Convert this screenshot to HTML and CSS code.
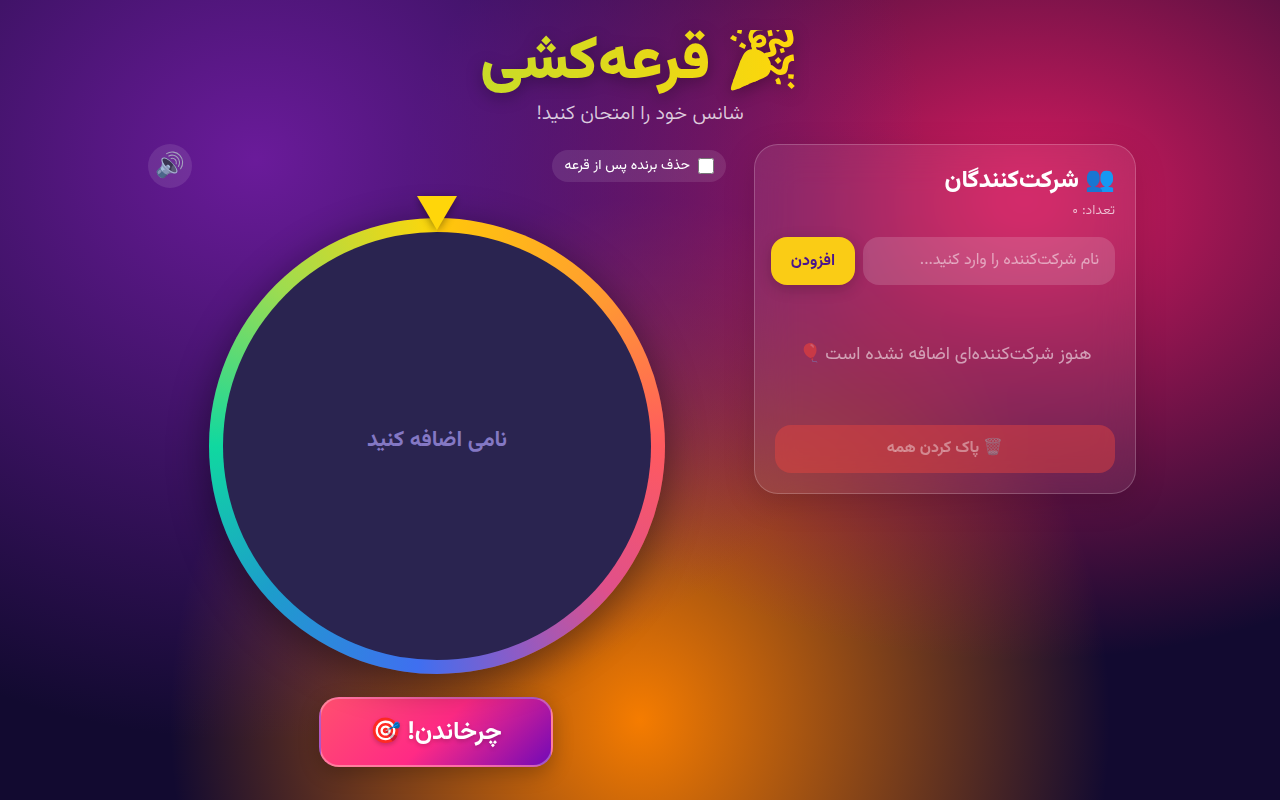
FILE: index.html
```html
<!DOCTYPE html>
<html lang="fa" dir="rtl">
<head>
<meta charset="utf-8">
<title>قرعه‌کشی</title>
<link rel="stylesheet" href="styles.css">
</head>
<body>
<div class="page">
  <header class="head">
    <h1 class="title">🎉 قرعه‌کشی</h1>
    <p class="subtitle">شانس خود را امتحان کنید!</p>
  </header>
  <main class="layout">
    <section class="panel">
      <h2 class="panel-title">👥 شرکت‌کنندگان</h2>
      <div class="count">تعداد: ۰</div>
      <div class="add-row">
        <input class="name-input" type="text" placeholder="نام شرکت‌کننده را وارد کنید...">
        <button class="add-btn">افزودن</button>
      </div>
      <div class="empty">هنوز شرکت‌کننده‌ای اضافه نشده است 🎈</div>
      <button class="clear-btn">🗑️ پاک کردن همه</button>
    </section>
    <section class="stage">
      <button class="sound">🔊</button>
      <label class="remove-toggle"><input class="check" type="checkbox"><span>حذف برنده پس از قرعه</span></label>
      <div class="wheel-wrap">
        <div class="pointer"></div>
        <div class="wheel"><div class="wheel-inner"><span class="wheel-text">نامی اضافه کنید</span></div></div>
      </div>
      <button class="spin">چرخاندن! 🎯</button>
    </section>
  </main>
</div>
</body>
</html>
```
FILE: styles.css
```css
* { box-sizing: border-box; }
html, body { height: 100%; }
body {
  margin: 0;
  height: 800px;
  overflow: hidden;
  font-family: Vazirmatn, "DejaVu Sans", sans-serif;
  color: #fff;
  background:
    radial-gradient(ellipse 670px 580px at 256px 160px, #6a1b9a 0%, rgba(106,27,154,0) 100%),
    radial-gradient(ellipse 620px 460px at 1024px 200px, #d81b60 0%, rgba(216,27,96,0) 100%),
    radial-gradient(ellipse 470px 520px at 640px 720px, #f57c00 0%, rgba(245,124,0,0) 100%),
    #120a30;
}
.page { width: 1000px; margin: 0 auto; padding-top: 30px; }
.head { display: flex; flex-direction: column; align-items: center; }
.title {
  margin: 0;
  font-size: 60px;
  line-height: 66px;
  font-weight: 900;
  background: linear-gradient(90deg, #c8dc28, #ffd60a);
  -webkit-background-clip: text;
  background-clip: text;
  color: transparent;
  filter: drop-shadow(0 4px 8px rgba(0,0,0,.3));
}
.subtitle { margin: 5px 0 0; font-size: 20px; line-height: 26px; font-weight: 300; color: rgba(255,255,255,.8); }
.layout { display: flex; gap: 28px; margin: 17px 4px 0 8px; align-items: flex-start; justify-content: space-between; }
.panel {
  width: 382px;
  height: 350px;
  padding: 20px;
  border: 1px solid rgba(255,255,255,.2);
  border-radius: 24px;
  background: rgba(255,255,255,.08);
  -webkit-backdrop-filter: blur(20px);
  backdrop-filter: blur(20px);
  box-shadow: 0 8px 32px rgba(0,0,0,.15);
  display: flex;
  flex-direction: column;
}
.panel-title { margin: 0; font-size: 24px; line-height: 32px; font-weight: 800; }
.count { font-size: 14px; line-height: 20px; font-weight: 300; color: rgba(255,255,255,.7); margin-top: 4px; }
.add-row { display: flex; gap: 8px; margin: 16px 0 0 -4px; }
.name-input {
  flex: 1;
  min-width: 0;
  height: 48px;
  padding: 0 16px 1px;
  border: 0;
  border-radius: 16px;
  background: rgba(255,255,255,.15);
  color: #fff;
  font: 16px Vazirmatn, sans-serif;
}
.name-input::placeholder { color: rgba(255,255,255,.5); }
.add-btn {
  width: 84px;
  height: 48px;
  border: 0;
  border-radius: 16px;
  background: #facc15;
  color: #4a148c;
  font: 700 16px Vazirmatn, sans-serif;
  box-shadow: 0 4px 15px rgba(0,0,0,.2);
}
.empty { flex: 1; display: flex; align-items: center; justify-content: center; font-size: 18px; color: rgba(255,255,255,.55); }
.clear-btn {
  height: 48px;
  padding-bottom: 2px;
  border: 0;
  border-radius: 16px;
  background: rgba(232,68,62,.45);
  color: rgba(255,255,255,.4);
  font: 700 16px Vazirmatn, sans-serif;
}
.stage { position: relative; width: 578px; height: 640px; display: flex; flex-direction: column; align-items: center; }
.sound {
  position: absolute;
  left: 0;
  top: 0;
  width: 44px;
  height: 44px;
  padding: 0 0 2px;
  border: 0;
  border-radius: 50%;
  background: rgba(255,255,255,.1);
  font-size: 24px;
  color: rgba(255,255,255,.8);
}
.remove-toggle {
  position: absolute;
  right: 0;
  top: 6px;
  height: 32px;
  width: 174px;
  padding: 0 12px;
  display: flex;
  align-items: center;
  gap: 8px;
  border-radius: 16px;
  background: rgba(255,255,255,.1);
  font-size: 14px;
  white-space: nowrap;
}
.check { flex: none; width: 16px; height: 16px; margin: 0; }
.wheel-wrap { position: relative; margin-top: 74px; width: 456px; height: 456px; }
.pointer {
  position: absolute;
  left: 208px;
  top: -22px;
  width: 0;
  height: 0;
  border-left: 20px solid transparent;
  border-right: 20px solid transparent;
  border-top: 34px solid #ffd60a;
  filter: drop-shadow(0 2px 4px rgba(0,0,0,.4));
  z-index: 2;
}
.wheel {
  width: 456px;
  height: 456px;
  padding: 14px;
  border-radius: 50%;
  background: conic-gradient(#ffc80a 0deg, #ff9f2e 45deg, #ff5a5f 90deg, #e0508a 130deg, #8a5cc8 160deg, #3f6ff0 185deg, #1c9ecb 230deg, #10d8a0 270deg, #9ddc50 315deg, #ffd60a 360deg);
  box-shadow: 0 10px 40px rgba(0,0,0,.45);
}
.wheel-inner { width: 100%; height: 100%; border-radius: 50%; background: #2a2450; display: flex; align-items: center; justify-content: center; }
.wheel-text { font-size: 22px; font-weight: 700; color: #8478c4; margin-bottom: 12px; }
.spin {
  margin: 23px 2px 0 0;
  width: 234px;
  height: 70px;
  border: 2px solid rgba(255,255,255,.3);
  border-radius: 20px;
  background: linear-gradient(135deg, #ff4f6f 0%, #ff2a85 50%, #7209b7 100%);
  color: #fff;
  font: 700 25px Vazirmatn, sans-serif;
  text-shadow: 0 2px 4px rgba(0,0,0,.2);
  box-shadow: 0 6px 20px rgba(0,0,0,.25);
}
```
